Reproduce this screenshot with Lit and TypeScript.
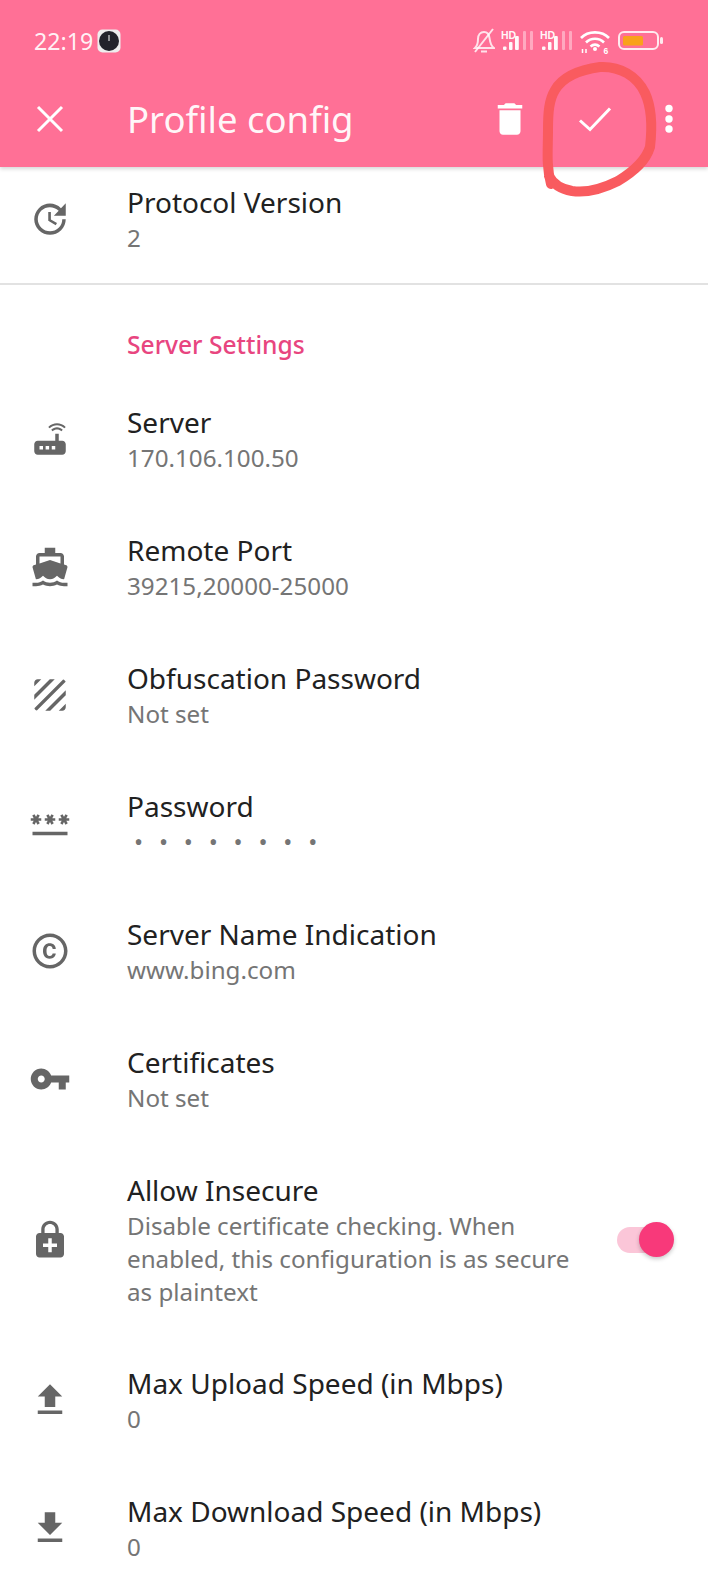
import { LitElement, html, css } from "lit";
import { customElement } from "lit/decorators.js";

const P = {
  update: "M21 10.12h-6.78l2.74-2.82c-2.73-2.7-7.15-2.8-9.88-.1-2.73 2.71-2.73 7.08 0 9.79s7.15 2.71 9.88 0C18.32 15.65 19 14.08 19 12.1h2c0 1.98-.88 4.55-2.64 6.29-3.51 3.48-9.21 3.48-12.72 0-3.5-3.47-3.53-9.11-.02-12.58s9.14-3.47 12.65 0L21 3v7.12zM12.5 8v4.25l3.5 2.08-.72 1.21L11 13V8h1.5z",
  router: "M20.2 5.9l.8-.8C19.6 3.7 17.8 3 16 3s-3.6.7-5 2.1l.8.8C13 4.8 14.5 4.2 16 4.2s3 .6 4.2 1.7zm-.9.8c-.9-.9-2.1-1.4-3.3-1.4s-2.4.5-3.3 1.4l.8.8c.7-.7 1.6-1 2.5-1 .9 0 1.8.3 2.5 1l.8-.8zM19 13h-2V9h-2v4H5c-1.1 0-2 .9-2 2v4c0 1.1.9 2 2 2h14c1.1 0 2-.9 2-2v-4c0-1.1-.9-2-2-2zM8 18H6v-2h2v2zm3.5 0h-2v-2h2v2zm3.5 0h-2v-2h2v2z",
  boat: "M20 21c-1.39 0-2.78-.47-4-1.32-2.44 1.71-5.56 1.71-8 0C6.78 20.53 5.39 21 4 21H2v2h2c1.38 0 2.74-.35 4-.99 2.52 1.29 5.48 1.29 8 0 1.26.65 2.62.99 4 .99h2v-2h-2zM3.95 19H4c1.6 0 3.02-.88 4-2 .98 1.12 2.4 2 4 2s3.02-.88 4-2c.98 1.12 2.4 2 4 2h.05l1.89-6.68c.08-.26.06-.54-.06-.78s-.34-.42-.6-.5L20 10.62V6c0-1.1-.9-2-2-2h-3V1H9v3H6c-1.1 0-2 .9-2 2v4.62l-1.29.42c-.26.08-.48.26-.6.5s-.15.52-.06.78L3.95 19zM6 6h12v3.97L12 8 6 9.97V6z",
  texture: "M19.51 3.08L3.08 19.51c.09.34.27.65.51.9.25.24.56.42.9.51L20.93 4.49c-.19-.69-.73-1.23-1.42-1.41zM11.88 3L3 11.88v2.83L14.71 3h-2.83zM5 3c-1.1 0-2 .9-2 2v2l4-4H5zm14 18c.55 0 1.05-.22 1.41-.59.37-.36.59-.86.59-1.41v-2l-4 4h2zm-9.71 0h2.83L21 12.12V9.29L9.29 21z",
  password: "M2 17h20v2H2v-2zm1.15-4.05L4 11.47l.85 1.48 1.3-.75-.85-1.48H7v-1.5H5.3l.85-1.47L4.85 7 4 8.47 3.15 7l-1.3.75.85 1.47H1v1.5h1.7l-.85 1.48 1.3.75zm6.7-.75l1.3.75.85-1.48.85 1.48 1.3-.75-.85-1.48H15v-1.5h-1.7l.85-1.47-1.3-.75L12 8.47 11.15 7l-1.3.75.85 1.47H9v1.5h1.7l-.85 1.48zM23 9.22h-1.7l.85-1.47-1.3-.75L20 8.47 19.15 7l-1.3.75.85 1.47H17v1.5h1.7l-.85 1.48 1.3.75.85-1.48.85 1.48 1.3-.75-.85-1.48H23v-1.5z",
  copyright: "M11.88 9.14c1.28.06 1.61 1.15 1.63 1.66h1.79c-.08-1.98-1.49-3.19-3.45-3.19C9.64 7.61 8 9 8 12.14c0 1.94.93 4.24 3.84 4.24 2.22 0 3.41-1.65 3.44-2.95h-1.79c-.03.59-.45 1.38-1.63 1.44-1.31-.04-1.86-1.06-1.86-2.73 0-2.89 1.28-2.98 1.88-3zM12 2C6.48 2 2 6.48 2 12s4.48 10 10 10 10-4.48 10-10S17.52 2 12 2zm0 18c-4.41 0-8-3.59-8-8s3.59-8 8-8 8 3.59 8 8-3.59 8-8 8z",
  key: "M12.65 10C11.83 7.67 9.61 6 7 6c-3.31 0-6 2.69-6 6s2.69 6 6 6c2.61 0 4.83-1.67 5.65-4H17v4h4v-4h2v-4H12.65zM7 14c-1.1 0-2-.9-2-2s.9-2 2-2 2 .9 2 2-.9 2-2 2z",
  lock: "M18 8h-1V6c0-2.76-2.24-5-5-5S7 3.24 7 6v2H6c-1.1 0-2 .9-2 2v10c0 1.1.9 2 2 2h12c1.1 0 2-.9 2-2V10c0-1.1-.9-2-2-2zM8.9 6c0-1.71 1.39-3.1 3.1-3.1s3.1 1.39 3.1 3.1v2H8.9V6zM16 16h-3v3h-2v-3H8v-2h3v-3h2v3h3v2z",
  upload: "M9 16h6v-6h4l-7-7-7 7h4zm-4 2h14v2H5z",
  download: "M19 9h-4V3H9v6H5l7 7 7-7zM5 18v2h14v-2H5z",
  trash: "M6 19c0 1.1.9 2 2 2h8c1.1 0 2-.9 2-2V7H6v12zM19 4h-3.5l-1-1h-5l-1 1H5v2h14V4z",
};

const icon = (d: string) => html`<svg class="ic" viewBox="0 0 24 24"><path d=${d}></path></svg>`;

const bars = html`<svg class="sig" viewBox="0 0 30 19">
  <rect x="0" y="15.500" width="3.500" height="3.500" rx="1" fill="#fff" fill-opacity=".95"></rect>
  <rect x="6" y="11" width="3.500" height="8" rx="1" fill="#fff" fill-opacity=".95"></rect>
  <rect x="12" y="5" width="3.800" height="14" rx="1" fill="#fff" fill-opacity=".95"></rect>
  <rect x="20" y="0" width="3" height="19" rx="1" fill="#fff" fill-opacity=".4"></rect>
  <rect x="27" y="0" width="3" height="19" rx="1" fill="#fff" fill-opacity=".4"></rect>
</svg>`;

const rowsA = [
  { i: P.router, t: "Server", s: "170.106.100.50" },
  { i: P.boat, t: "Remote Port", s: "39215,20000-25000" },
  { i: P.texture, t: "Obfuscation Password", s: "Not set" },
  { i: P.password, t: "Password", s: "••••••••", dots: true },
  { i: P.copyright, t: "Server Name Indication", s: "www.bing.com" },
  { i: P.key, t: "Certificates", s: "Not set" },
  { i: P.lock, t: "Allow Insecure", s: "Disable certificate checking. When enabled, this configuration is as secure as plaintext", sw: true },
  { i: P.upload, t: "Max Upload Speed (in Mbps)", s: "0" },
  { i: P.download, t: "Max Download Speed (in Mbps)", s: "0" },
];

@customElement("app-root")
export class AppRoot extends LitElement {
  static styles = css`
    :host { display: block; width: 708px; height: 1575px; overflow: hidden; position: relative; background: #fff;
      font-family: "Noto Sans", "Open Sans", sans-serif; }
    .top { position: relative; z-index: 2; background: #ff7096; height: 167px; box-shadow: 0 2px 4px rgba(0,0,0,.16); display: flex; flex-direction: column; }
    .status { height: 81px; flex: none; padding: 29px 0 0 34px; box-sizing: border-box; display: flex; align-items: flex-start; color: #fff; }
    .time { font-size: 23.2px; line-height: 24px; color: rgba(255,255,255,.92); width: 63px; }
    .clock { width: 24px; height: 24px; }
    .sys { margin-left: auto; margin-right: 45px; display: flex; align-items: flex-start; margin-top: 1px; }
    .bell { width: 22px; height: 25px; margin: -2px 5px 0 0; }
    .cell { position: relative; width: 33px; height: 24px; margin-right: 6px; }
    .cell.last { margin-right: 7px; }
    .hd { position: absolute; left: 1px; top: 0; font: 700 10.5px/10px "Liberation Sans", sans-serif; color: rgba(255,255,255,.95); }
    .sig { position: absolute; left: 3px; top: 1px; width: 30px; height: 19px; }
    .wifi { width: 32px; height: 30px; margin-right: 7px; }
    .wifi text { font: 700 8.5px "Liberation Sans", sans-serif; fill: #fff; }
    .batt { width: 45px; height: 20px; }
    .bar { display: flex; align-items: center; height: 75px; flex: none; }
    .bar svg { fill: #fff; display: block; flex: none; }
    .close { width: 40px; height: 40px; margin-left: 29.5px; }
    .title { margin-left: 57.5px; font-size: 36.5px; line-height: 44px; color: rgba(255,255,255,.95); flex: 1; }
    .trash { width: 42px; height: 42px; margin-right: 44.5px; }
    .check { width: 40px; height: 40px; margin-right: 47.7px; }
    .more { width: 12px; height: 40px; margin-right: 33.3px; }

    .list { margin-top: -12px; }
    .row { display: flex; align-items: center; min-height: 128px; padding: 0 34px 0 28.5px; box-sizing: border-box; }
    .row.tall { padding-top: 29px; padding-bottom: 28px; }
    .ic { width: 42px; height: 42px; fill: #666; flex: none; display: block; }
    .text { margin-left: 56.5px; flex: 1; min-width: 0; }
    .t { font-size: 28px; line-height: 36px; color: #212121; }
    .s { font-size: 24.2px; line-height: 33px; margin-top: 1px; color: #757575; }
    .s.wrap { max-width: 450px; }
    .dots { letter-spacing: 15.8px; padding-left: 7px; }
    .div { height: 2px; background: #e2e2e2; }
    .sect { height: 90px; box-sizing: border-box; padding: 44px 0 0 127px; font-size: 24.6px; line-height: 32px; color: #e8457f; font-weight: 500; }
    .sw { position: relative; width: 57px; height: 36px; flex: none; }
    .track { position: absolute; left: 0; right: 12px; top: 5px; height: 26px; border-radius: 13px; background: #fbc6d8; }
    .thumb { position: absolute; right: 0; top: 0; width: 35px; height: 35px; border-radius: 50%; background: #f8397a; box-shadow: 0 2px 4px rgba(0,0,0,.22); }
    .mark { position: absolute; z-index: 3; left: 0; top: 0; width: 708px; height: 210px; pointer-events: none; }
  `;

  row(r: any) {
    return html`<div class="row ${r.sw ? "tall" : ""}">
      ${icon(r.i)}
      <div class="text">
        <div class="t">${r.t}</div>
        <div class="s ${r.dots ? "dots" : ""} ${r.sw ? "wrap" : ""}">${r.s}</div>
      </div>
      ${r.sw ? html`<div class="sw"><div class="track"></div><div class="thumb"></div></div>` : ""}
    </div>`;
  }

  render() {
    return html`
      <div class="top">
        <div class="status">
          <div class="time">22:19</div>
          <svg class="clock" viewBox="0 0 24 24">
            <rect x="0.5" y="0.5" width="23" height="23" rx="5" fill="#eee"></rect>
            <circle cx="12" cy="12" r="10" fill="#23232b"></circle>
            <path d="M12 6v6" stroke="#fff" stroke-width="1"></path>
          </svg>
          <div class="sys">
            <svg class="bell" viewBox="0 0 22 25" fill="none" stroke="#fff" stroke-width="2" stroke-opacity=".8">
              <path d="M2 20c2-2 3-4 3-9 0-4 2.500-7 6-7 3 0 5 2 5.500 6 .5 4 1.500 8 4.500 10z"></path>
              <path d="M8 23.500h6"></path><path d="M20 1L2 24"></path>
            </svg>
            <div class="cell"><span class="hd">HD</span>${bars}</div>
            <div class="cell last"><span class="hd">HD</span>${bars}</div>
            <svg class="wifi" viewBox="0 0 32 30" fill="none" stroke="#fff" stroke-width="2.600">
              <path d="M2 8C9 .5 23 .5 30 8"></path><path d="M7 12.500C12 7.500 20 7.500 25 12.500"></path><path d="M11.500 16.500c3-2.500 6-2.500 9 0"></path>
              <circle cx="16" cy="19" r="2" fill="#fff" stroke="none"></circle>
              <path d="M3.500 23v-4M7 23v-4" stroke-width="1.500"></path>
              <text x="24.500" y="24" stroke="none">6</text>
            </svg>
            <svg class="batt" viewBox="0 0 45 20">
              <rect x="1" y="2" width="39" height="17" rx="5" fill="none" stroke="#fff" stroke-opacity=".85" stroke-width="2"></rect>
              <rect x="5" y="6" width="20" height="9.500" rx="1.500" fill="#f9a11b"></rect>
              <rect x="42" y="7" width="3" height="7" rx="1.500" fill="#fff" fill-opacity=".85"></rect>
            </svg>
          </div>
        </div>
        <div class="bar">
          <svg class="close" viewBox="0 0 40 40"><path d="M8 8L32 32M32 8L8 32" stroke="#fff" stroke-width="3" fill="none"></path></svg>
          <div class="title">Profile config</div>
          <svg class="trash" viewBox="0 0 24 24"><path d=${P.trash}></path></svg>
          <svg class="check" viewBox="0 0 40 40"><path d="M5 21.500L15 30.500 35 9.500" stroke="#fff" stroke-width="3" fill="none"></path></svg>
          <svg class="more" viewBox="0 0 12 40"><circle cx="6" cy="9.500" r="3.700"></circle><circle cx="6" cy="20" r="3.700"></circle><circle cx="6" cy="30" r="3.700"></circle></svg>
        </div>
      </div>
      <div class="list">
        <div class="row">${icon(P.update)}<div class="text"><div class="t">Protocol Version</div><div class="s">2</div></div></div>
        <div class="div"></div>
        <div class="sect">Server Settings</div>
        ${rowsA.map((r) => this.row(r))}
      </div>
      <svg class="mark" viewBox="0 0 708 210" fill="none">
        <path d="M551 184C546 165 548 150 548 130C548 112 549 100 555 90C562 78 578 70 600 67C620 66 637 76 645 93C652 108 652 130 650 147C646 160 636 170 618 181C600 190 585 193 572 191C561 189 553 184 549 176" stroke="#f95b5f" stroke-width="10" stroke-linecap="round" stroke-linejoin="round"></path>
      </svg>
    `;
  }
}
